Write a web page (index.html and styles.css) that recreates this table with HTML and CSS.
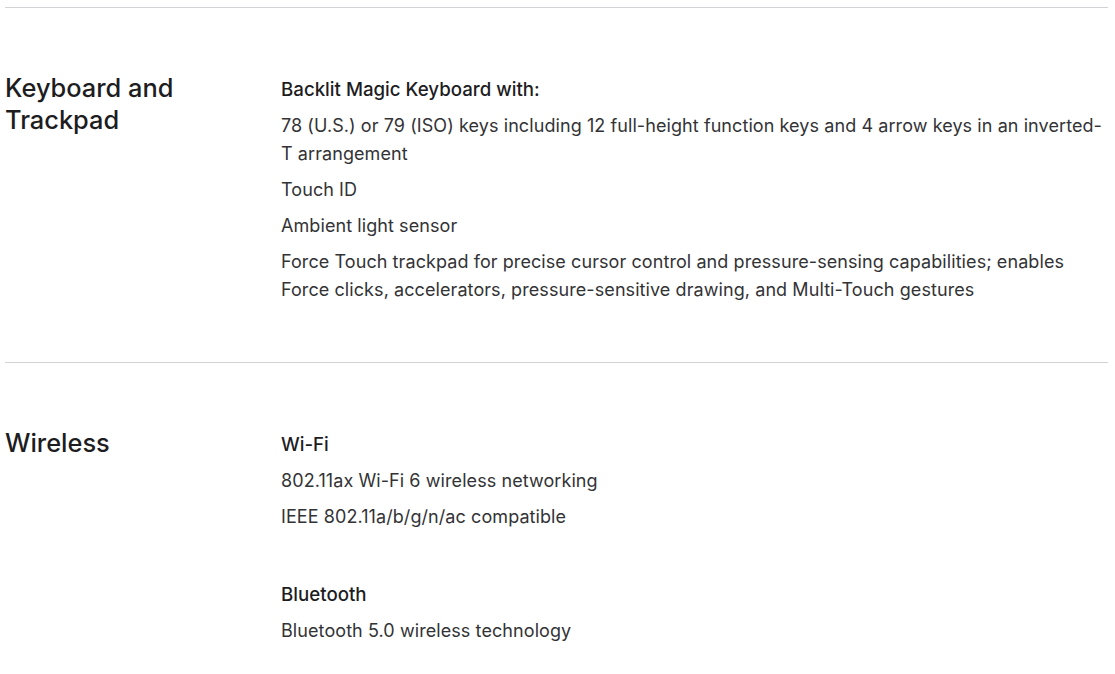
FILE: index.html
```html
<!DOCTYPE html>
<html lang="en">
<head>
<meta charset="utf-8">
<title>Tech Specs</title>
<link rel="stylesheet" href="styles.css">
</head>
<body>
<main class="specs">
  <section class="spec">
    <h2 class="spec-title">Keyboard and Trackpad</h2>
    <div class="spec-body">
      <div class="group">
        <h3 class="group-title">Backlit Magic Keyboard with:</h3>
        <p>78 (U.S.) or 79 (ISO) keys including 12 full-height function keys and 4 arrow keys in an inverted-T arrangement</p>
        <p>Touch ID</p>
        <p>Ambient light sensor</p>
        <p>Force Touch trackpad for precise cursor control and pressure-sensing capabilities; enables Force clicks, accelerators, pressure-sensitive drawing, and Multi-Touch gestures</p>
      </div>
    </div>
  </section>
  <section class="spec">
    <h2 class="spec-title">Wireless</h2>
    <div class="spec-body">
      <div class="group">
        <h3 class="group-title">Wi-Fi</h3>
        <p>802.11ax Wi-Fi 6 wireless networking</p>
        <p>IEEE 802.11a/b/g/n/ac compatible</p>
      </div>
      <div class="group">
        <h3 class="group-title">Bluetooth</h3>
        <p>Bluetooth 5.0 wireless technology</p>
      </div>
    </div>
  </section>
</main>
</body>
</html>
```
FILE: styles.css
```css
html, body {
  margin: 0;
  padding: 0;
  background: #ffffff;
}
body {
  font-family: Inter, "Noto Sans", "Liberation Sans", sans-serif;
  color: #1d1d1f;
}
.specs {
  margin: 7px 7px 0 5px;
}
.spec {
  display: grid;
  grid-template-columns: 276px 1fr;
  border-top: 1px solid #d2d2d7;
  padding: 64px 0 58px;
}
.spec-title {
  margin: 0;
  max-width: 230px;
  font-size: 25.4px;
  line-height: 32px;
  font-weight: 500;
  color: #1d1d1f;
}
.spec-body {
  padding-top: 4px;
  display: flex;
  flex-direction: column;
  gap: 50px;
}
.group-title {
  margin: 0;
  font-size: 18.7px;
  line-height: 28px;
  font-weight: 500;
  color: #1d1d1f;
}
.group p {
  margin: 8px 0 0;
  font-size: 18px;
  line-height: 28px;
  font-weight: 400;
  letter-spacing: 0.08px;
  color: #333336;
}
```
